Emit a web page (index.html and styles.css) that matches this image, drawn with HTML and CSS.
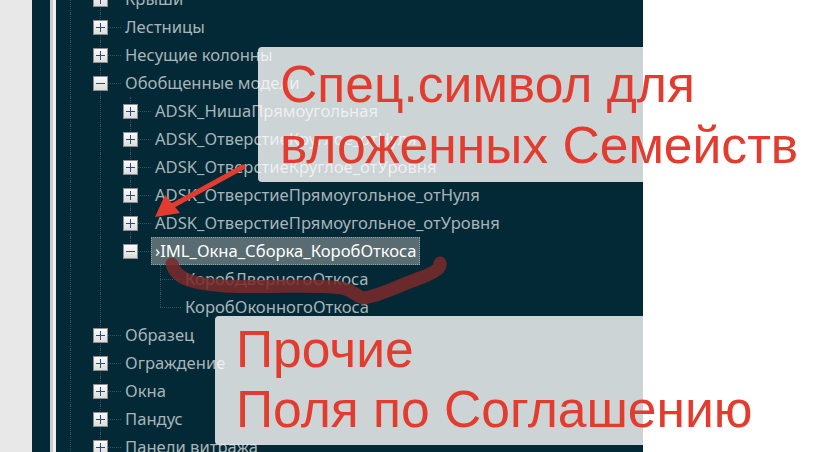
FILE: index.html
```html
<!DOCTYPE html>
<html lang="ru">
<head>
<meta charset="utf-8">
<link rel="stylesheet" href="styles.css">
</head>
<body>
<div class="side"></div>
<div class="panel">
  <div class="edge"></div>
  <div class="stripe-a"></div>
  <div class="stripe-b"></div>
  <div class="tree">
    <div class="row"><span class="g v"></span><span class="x v"><span class="box plus"></span></span><span class="label">Крыши</span></div>
    <div class="row"><span class="g v"></span><span class="x v"><span class="box plus"></span></span><span class="label">Лестницы</span></div>
    <div class="row"><span class="g v"></span><span class="x v"><span class="box plus"></span></span><span class="label">Несущие колонны</span></div>
    <div class="row"><span class="g v"></span><span class="x v"><span class="box minus"></span></span><span class="label">Обобщенные модели</span></div>
    <div class="row"><span class="g v"></span><span class="g v"></span><span class="x v"><span class="box plus"></span></span><span class="label">ADSK_НишаПрямоугольная</span></div>
    <div class="row"><span class="g v"></span><span class="g v"></span><span class="x v"><span class="box plus"></span></span><span class="label">ADSK_ОтверстиеКруглое_отНуля</span></div>
    <div class="row"><span class="g v"></span><span class="g v"></span><span class="x v"><span class="box plus"></span></span><span class="label">ADSK_ОтверстиеКруглое_отУровня</span></div>
    <div class="row"><span class="g v"></span><span class="g v"></span><span class="x v"><span class="box plus"></span></span><span class="label">ADSK_ОтверстиеПрямоугольное_отНуля</span></div>
    <div class="row"><span class="g v"></span><span class="g v"></span><span class="x v"><span class="box plus"></span></span><span class="label">ADSK_ОтверстиеПрямоугольное_отУровня</span></div>
    <div class="row"><span class="g v"></span><span class="g v"></span><span class="x t"><span class="box minus"></span></span><span class="label sel">›IML_Окна_Сборка_КоробОткоса</span></div>
    <div class="row"><span class="g v"></span><span class="g v"></span><span class="g"></span><span class="x v"></span><span class="label">КоробДверногоОткоса</span></div>
    <div class="row"><span class="g v"></span><span class="g v"></span><span class="g"></span><span class="x t"></span><span class="label">КоробОконногоОткоса</span></div>
    <div class="row"><span class="g v"></span><span class="x v"><span class="box plus"></span></span><span class="label">Образец</span></div>
    <div class="row"><span class="g v"></span><span class="x v"><span class="box plus"></span></span><span class="label">Ограждение</span></div>
    <div class="row"><span class="g v"></span><span class="x v"><span class="box plus"></span></span><span class="label">Окна</span></div>
    <div class="row"><span class="g v"></span><span class="x v"><span class="box plus"></span></span><span class="label">Пандус</span></div>
    <div class="row"><span class="g v"></span><span class="x v"><span class="box plus"></span></span><span class="label">Панели витража</span></div>
  </div>
</div>
<div class="rest"></div>

<svg class="marks" width="823" height="452" viewBox="0 0 823 452">
  <path class="squiggle" d="M172,264 C176,280 195,284 225,286 C270,288 320,284 342,288 C355,291 358,298 364,298 C380,296 400,285 420,278 C436,272 441,268 440,263"/>
  <line class="arrow-line" x1="243" y1="167" x2="172" y2="206"/>
  <polygon class="arrow-head" points="155,217 165,195 180,213"/>
</svg>

<div class="note note-top">
  <div class="note-line">Спец.символ для</div>
  <div class="note-line">вложенных Семейств</div>
</div>
<div class="note note-bottom">
  <div class="note-line">Прочие</div>
  <div class="note-line">Поля по Соглашению</div>
</div>
</body>
</html>
```

FILE: styles.css
```css
html, body {
  margin: 0;
  padding: 0;
}
body {
  width: 823px;
  height: 452px;
  overflow: hidden;
  display: flex;
  position: relative;
  background: #ffffff;
  font-family: "Noto Sans", "DejaVu Sans", sans-serif;
}
.side {
  width: 32px;
  flex: none;
  background: #e8e8e8;
}
.panel {
  width: 611px;
  flex: none;
  display: flex;
  background: #022935;
  overflow: hidden;
}
.edge {
  width: 18px;
  flex: none;
}
.stripe-a {
  width: 3px;
  flex: none;
  background: #c9c9c9;
}
.stripe-b {
  width: 3px;
  flex: none;
  background: #eeeeee;
}
.rest {
  flex: 1;
  background: #ffffff;
}
.tree {
  margin-top: -15px;
  margin-left: -1px;
  display: flex;
  flex-direction: column;
}
.row {
  height: 28px;
  display: flex;
  align-items: center;
  white-space: nowrap;
}
.g, .x {
  width: 30px;
  height: 28px;
  flex: none;
  position: relative;
}
.g.v::before, .x.v::before, .x.t::before {
  content: "";
  position: absolute;
  left: 15px;
  top: 0;
  height: 28px;
  border-left: 1px dotted #35525c;
}
.x.t::before {
  height: 14px;
}
.x::after {
  content: "";
  position: absolute;
  left: 15px;
  top: 14px;
  width: 21px;
  border-top: 1px dotted #35525c;
}
.box {
  position: absolute;
  left: 8px;
  top: 7px;
  width: 13px;
  height: 13px;
  border: 1px solid #8e8e8e;
  background: linear-gradient(#fbfbfb, #dcdcdc);
  z-index: 1;
}
.box::before {
  content: "";
  position: absolute;
  left: 2px;
  top: 6px;
  width: 9px;
  height: 1px;
  background: #2c4796;
}
.box.plus::after {
  content: "";
  position: absolute;
  left: 6px;
  top: 2px;
  width: 1px;
  height: 9px;
  background: #2c4796;
}
.label {
  margin-left: 6px;
  padding: 0 3px;
  height: 26px;
  line-height: 26px;
  font-size: 16.6px;
  color: #a8b4b8;
  border: 1px solid transparent;
  position: relative;
  z-index: 1;
}
.label.sel {
  background: #596c71;
  color: #ffffff;
  border: 1px dotted #8fa0a4;
}
.marks {
  position: absolute;
  left: 0;
  top: 0;
  z-index: 3;
}
.squiggle {
  fill: none;
  stroke: rgba(124, 42, 42, 0.86);
  stroke-width: 13;
  stroke-linecap: round;
  stroke-linejoin: round;
}
.arrow-line {
  stroke: #e43b2f;
  stroke-width: 5;
  stroke-linecap: round;
}
.arrow-head {
  fill: #e43b2f;
}
.note {
  position: absolute;
  z-index: 4;
  background: rgba(255, 255, 255, 0.8);
  border-radius: 4px;
  font-family: "Liberation Sans", Arial, sans-serif;
  font-size: 51.6px;
  line-height: 61px;
  color: #e43b2f;
  white-space: nowrap;
  box-sizing: border-box;
}
.note-top {
  left: 258px;
  top: 47px;
  width: 600px;
  height: 135px;
  padding: 7px 0 0 22px;
}
.note-bottom {
  left: 215px;
  top: 316px;
  width: 640px;
  height: 129px;
  padding: 3px 0 0 21px;
  line-height: 60px;
}
```
